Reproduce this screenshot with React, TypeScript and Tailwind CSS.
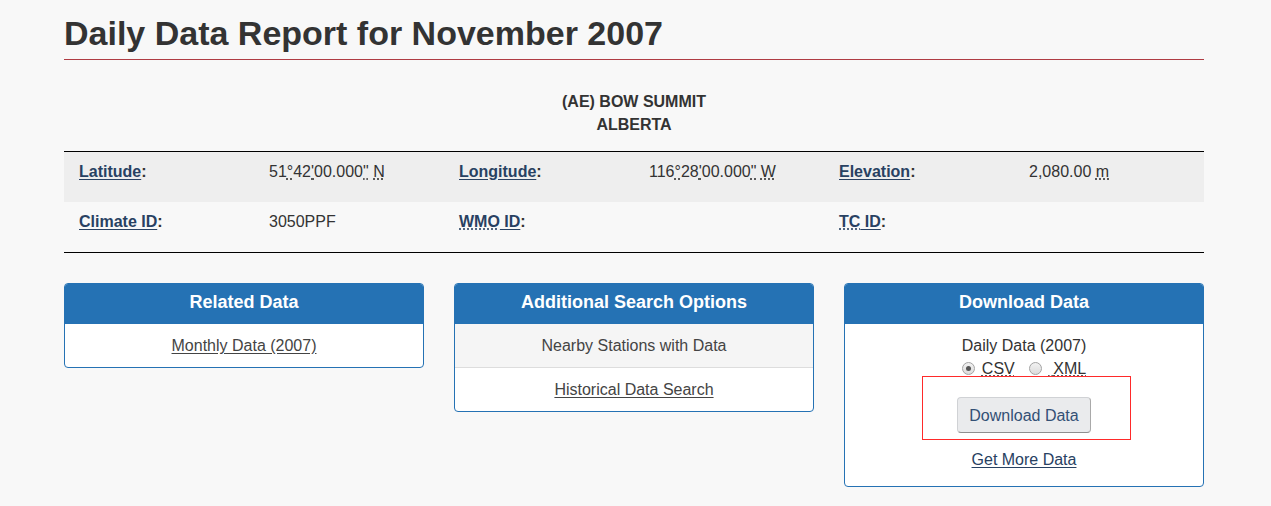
import React from "react";

function Abbr({ children }: { children: React.ReactNode }) {
  return <span className="underline decoration-dotted underline-offset-[2px]">{children}</span>;
}

function Label({ children }: { children: React.ReactNode }) {
  return (
    <span className="font-bold">
      <a href="#" className="text-[#284162] underline underline-offset-[2px]">{children}</a>:
    </span>
  );
}

function Radio({ checked }: { checked?: boolean }) {
  return (
    <span className="flex h-[13px] w-[13px] items-center justify-center rounded-full border border-[#a3a3a3] bg-gradient-to-b from-[#f2f2f2] to-[#dcdcdc]">
      {checked ? <span className="h-[5px] w-[5px] rounded-full bg-[#555]" /> : null}
    </span>
  );
}

function Panel({ title, children }: { title: string; children: React.ReactNode }) {
  return (
    <div className="overflow-hidden rounded-[4px] border border-[#2572b4] bg-white">
      <div className="bg-[#2572b4] pb-[12px] pt-[8px] text-center text-[18px] font-bold leading-[20px] text-white">
        {title}
      </div>
      {children}
    </div>
  );
}

export default function App() {
  return (
    <div className="min-h-[506px] bg-[#f8f8f8] font-['Liberation_Sans',Arial,sans-serif] text-[16px] leading-[23px] text-[#333]">
      <div className="ml-[64px] w-[1140px] pt-[13px]">
        <h1 className="border-b border-[#af3c43] pb-[6px] text-[34px] font-bold leading-[40px] text-[#333]">
          Daily Data Report for November 2007
        </h1>

        <div className="mt-[30px] text-center font-bold">
          <div>(AE) BOW SUMMIT</div>
          <div>ALBERTA</div>
        </div>

        <div className="mt-[15px] border-y border-black">
          <div className="grid h-[50px] grid-cols-6 bg-[#eee]">
            <div className="px-[15px] pt-[8px]"><Label>Latitude</Label></div>
            <div className="px-[15px] pt-[8px]">
              51<Abbr>°</Abbr>42<Abbr>'</Abbr>00.000<Abbr>"</Abbr> <Abbr>N</Abbr>
            </div>
            <div className="px-[15px] pt-[8px]"><Label>Longitude</Label></div>
            <div className="px-[15px] pt-[8px]">
              116<Abbr>°</Abbr>28<Abbr>'</Abbr>00.000<Abbr>"</Abbr> <Abbr>W</Abbr>
            </div>
            <div className="px-[15px] pt-[8px]"><Label>Elevation</Label></div>
            <div className="px-[15px] pt-[8px]">
              2,080.00 <Abbr>m</Abbr>
            </div>
          </div>
          <div className="grid h-[50px] grid-cols-6">
            <div className="px-[15px] pt-[8px]"><Label>Climate ID</Label></div>
            <div className="px-[15px] pt-[8px]">3050PPF</div>
            <div className="px-[15px] pt-[8px]">
              <span className="font-bold">
                <a href="#" className="text-[#284162]">
                  <span className="underline decoration-dotted underline-offset-[2px]">WMO</span>
                  <span className="underline underline-offset-[2px]"> ID</span>
                </a>
                :
              </span>
            </div>
            <div className="px-[15px] pt-[8px]"></div>
            <div className="px-[15px] pt-[8px]">
              <span className="font-bold">
                <a href="#" className="text-[#284162]">
                  <span className="underline decoration-dotted underline-offset-[2px]">TC</span>
                  <span className="underline underline-offset-[2px]"> ID</span>
                </a>
                :
              </span>
            </div>
            <div className="px-[15px] pt-[8px]"></div>
          </div>
        </div>

        <div className="mt-[30px] grid grid-cols-3 items-start gap-[30px]">
          <Panel title="Related Data">
            <div className="px-[15px] py-[10px] text-center">
              <a href="#" className="text-[#444] underline underline-offset-[2px]">Monthly Data (2007)</a>
            </div>
          </Panel>

          <Panel title="Additional Search Options">
            <div className="border-b border-[#ddd] bg-[#f5f5f5] px-[15px] py-[10px] text-center text-[#444]">
              Nearby Stations with Data
            </div>
            <div className="px-[15px] py-[10px] text-center">
              <a href="#" className="text-[#444] underline underline-offset-[2px]">Historical Data Search</a>
            </div>
          </Panel>

          <Panel title="Download Data">
            <div className="relative flex flex-col items-center px-[15px] pb-[15px] pt-[10px]">
              <div>Daily Data (2007)</div>
              <div className="flex items-center">
                <Radio checked />
                <span className="ml-[7px]"><Abbr>CSV</Abbr></span>
                <span className="ml-[14px]"><Radio /></span>
                <span className="ml-[7px]"><Abbr>{"\u00a0"}XML</Abbr></span>
              </div>
              <button className="mt-[17px] h-[36px] rounded-[4px] border border-[#d0d2d5] border-b-[#8f8f8f] border-r-[#a9a9a9] bg-[#eaebed] px-[11px] text-[16px] leading-[23px] text-[#335075]">
                Download Data
              </button>
              <a href="#" className="mt-[15px] text-[#284162] underline underline-offset-[2px]">Get More Data</a>
              <div className="pointer-events-none absolute left-[77px] top-[52px] h-[64px] w-[209px] border border-[#ff2a2a]" />
            </div>
          </Panel>
        </div>
      </div>
    </div>
  );
}
